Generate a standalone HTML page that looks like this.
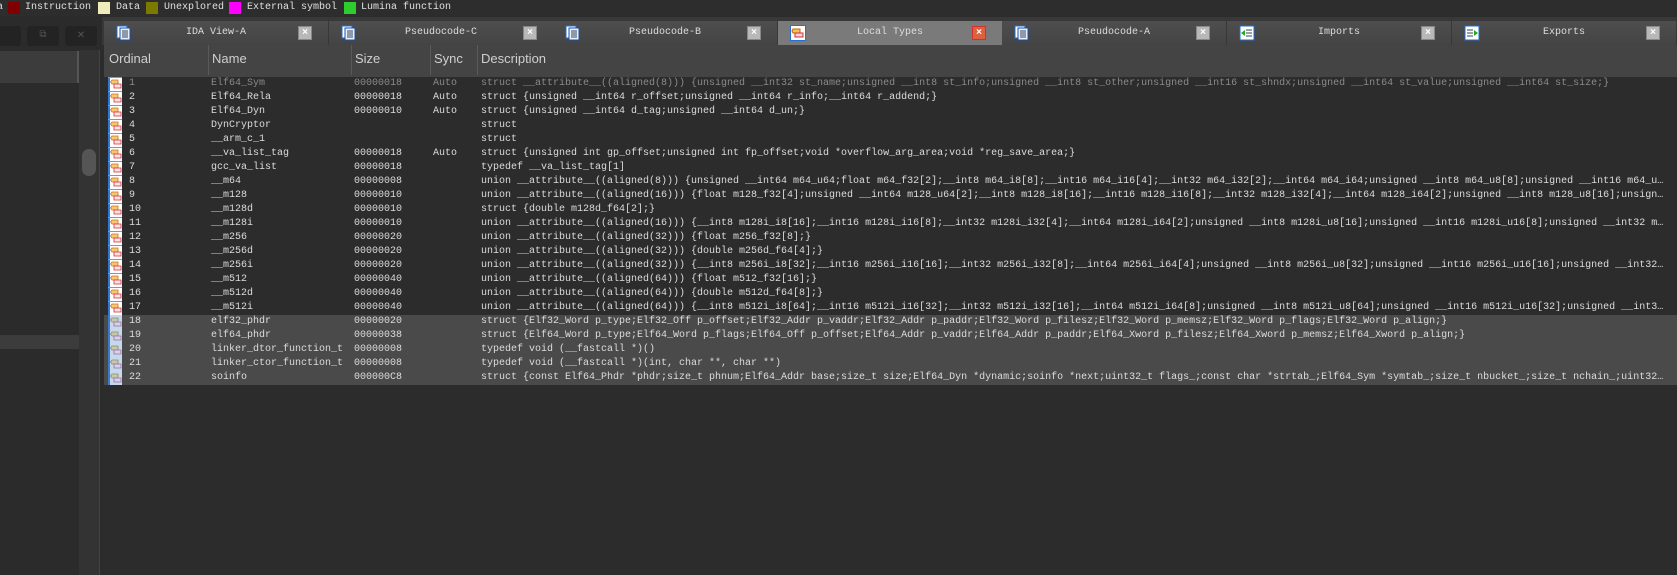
<!DOCTYPE html>
<html><head><meta charset="utf-8"><style>
*{margin:0;padding:0;box-sizing:border-box}
body{width:1677px;height:575px;background:#2c2c2c;overflow:hidden;position:relative;font-family:"Liberation Mono","Noto Sans CJK SC",monospace;font-size:10px;color:#dcdcdc}
.abs{position:absolute}
.leg{top:0;left:0;height:16px;width:1677px;background:#2d2d2d}
.sq{position:absolute;top:2px;width:12px;height:12px}
.lt{position:absolute;top:1px;line-height:14px;color:#e0e0e0;font-size:10px}
.tabbar{top:17px;left:102px;width:1575px;height:28px;background:#383838}
.tab{position:absolute;top:21px;height:24px;width:224px;background:linear-gradient(#4e4e4e,#444)}
.tab.act{background:#7a7a7a}
.tab .t{position:absolute;left:0;width:224px;text-align:center;top:5px;line-height:14px;color:#ddd}
.tab .x{position:absolute;left:194px;top:5px;width:14px;height:14px;background:#b8b8b8;border:1px solid #888;color:#fff;font:bold 10px "Liberation Sans",sans-serif;text-align:center;line-height:12px}
.tab.act .x{background:#e0603e;border-color:#c33}
.tab svg{position:absolute;left:12px;top:4px}
.hdr{top:45px;left:104px;width:1573px;height:32px;background:#444}
.hc{position:absolute;top:1px;font:13px "Liberation Sans",sans-serif;color:#cfcfcf;line-height:32px;top:0;height:28px;line-height:18px;padding-top:5px}
.sep{position:absolute;top:45px;width:1px;height:30px;background:#5a5a5a}
.row{position:absolute;left:104px;width:1573px;height:14px;line-height:14px;white-space:nowrap}
.row.sel{background:#4a4a4a}
.row span{position:absolute;top:0}
.row .d{left:377px;width:1187px;overflow:hidden;text-overflow:ellipsis}
.row.g{color:#8a8a8a}
.ic{position:absolute;left:4px;top:0}
</style></head><body>
<div class="abs leg"></div>
<span class="lt" style="left:-3px">a</span>
<div class="sq" style="left:8px;background:#800000"></div><span class="lt" style="left:25px">Instruction</span>
<div class="sq" style="left:98px;background:#f0ebbb"></div><span class="lt" style="left:116px">Data</span>
<div class="sq" style="left:146px;background:#7a7a00"></div><span class="lt" style="left:164px">Unexplored</span>
<div class="sq" style="left:229px;background:#ff00ff"></div><span class="lt" style="left:247px">External symbol</span>
<div class="sq" style="left:344px;background:#2ecc2e"></div><span class="lt" style="left:361px">Lumina function</span>

<!-- left panel -->
<div class="abs" style="left:0;top:17px;width:101px;height:558px;background:#2b2b2b"></div>
<div class="abs" style="left:-4px;top:26px;width:25px;height:20px;background:#232323;border-radius:3px"></div>
<div class="abs" style="left:27px;top:26px;width:32px;height:20px;background:#232323;border-radius:3px;color:#555;text-align:center;line-height:20px">⧉</div>
<div class="abs" style="left:65px;top:26px;width:32px;height:20px;background:#232323;border-radius:3px;color:#555;text-align:center;line-height:20px;font-family:'Liberation Sans'">✕</div>
<div class="abs" style="left:0;top:51px;width:77px;height:32px;background:#3c3c3c"></div>
<div class="abs" style="left:77px;top:51px;width:2px;height:32px;background:#555"></div>
<div class="abs" style="left:79px;top:50px;width:21px;height:525px;background:#333"></div>
<div class="abs" style="left:82px;top:149px;width:14px;height:27px;background:#555;border-radius:7px"></div>
<div class="abs" style="left:0;top:335px;width:79px;height:14px;background:#3c3c3c"></div>
<div class="abs" style="left:99px;top:50px;width:1px;height:525px;background:#444"></div>

<div class="abs tabbar"></div>
<div class="tab" style="left:104px"><svg width="16" height="16"><rect x="1" y="1" width="10" height="12" fill="#fff" stroke="#1e6fd0"/><rect x="4" y="3" width="10" height="12" fill="#e8f0ff" stroke="#1e4fa0"/><path d="M6 6h6M6 8h6M6 10h6M6 12h6" stroke="#345" /></svg><div class="t">IDA View-A</div><div class="x">×</div></div>
<div class="tab" style="left:329px"><svg width="16" height="16"><rect x="1" y="1" width="10" height="12" fill="#fff" stroke="#1e6fd0"/><rect x="4" y="3" width="10" height="12" fill="#e8f0ff" stroke="#1e4fa0"/><path d="M6 6h6M6 8h6M6 10h6M6 12h6" stroke="#345" /></svg><div class="t">Pseudocode-C</div><div class="x">×</div></div>
<div class="tab" style="left:553px"><svg width="16" height="16"><rect x="1" y="1" width="10" height="12" fill="#fff" stroke="#1e6fd0"/><rect x="4" y="3" width="10" height="12" fill="#e8f0ff" stroke="#1e4fa0"/><path d="M6 6h6M6 8h6M6 10h6M6 12h6" stroke="#345" /></svg><div class="t">Pseudocode-B</div><div class="x">×</div></div>
<div class="tab act" style="left:778px"><svg width="16" height="16"><rect x="0.5" y="0.5" width="15" height="15" fill="#fff" stroke="#2a6fd0"/><path d="M3 4h7v4H3l-1-2z" fill="#f6c060" stroke="#c60"/><path d="M5 8h8v4H5z" fill="#f8d0e0" stroke="#c33"/></svg><div class="t">Local Types</div><div class="x">×</div></div>
<div class="tab" style="left:1002px"><svg width="16" height="16"><rect x="1" y="1" width="10" height="12" fill="#fff" stroke="#1e6fd0"/><rect x="4" y="3" width="10" height="12" fill="#e8f0ff" stroke="#1e4fa0"/><path d="M6 6h6M6 8h6M6 10h6M6 12h6" stroke="#345" /></svg><div class="t">Pseudocode-A</div><div class="x">×</div></div>
<div class="tab" style="left:1227px"><svg width="16" height="16"><rect x="1" y="1" width="14" height="14" fill="#fff" stroke="#1e6fd0"/><path d="M7 5h6M7 8h6M7 11h6" stroke="#345"/><path d="M2 8l4-3v6z" fill="#2a2"/></svg><div class="t">Imports</div><div class="x">×</div></div>
<div class="tab" style="left:1452px"><svg width="16" height="16"><rect x="1" y="1" width="14" height="14" fill="#fff" stroke="#1e6fd0"/><path d="M3 5h6M3 8h6M3 11h6" stroke="#345"/><path d="M14 8l-4-3v6z" fill="#2a2"/></svg><div class="t">Exports</div><div class="x">×</div></div>

<div class="abs hdr"></div>
<div class="hc" style="left:109px;top:45px">Ordinal</div>
<div class="sep" style="left:208px"></div><div class="hc" style="left:212px;top:45px">Name</div>
<div class="sep" style="left:351px"></div><div class="hc" style="left:355px;top:45px">Size</div>
<div class="sep" style="left:430px"></div><div class="hc" style="left:434px;top:45px">Sync</div>
<div class="sep" style="left:477px"></div><div class="hc" style="left:481px;top:45px">Description</div>

<div id="rows"></div>
<svg width="0" height="0" style="position:absolute"><defs>
<symbol id="i" viewBox="0 0 14 14"><rect x="0" y="0" width="14" height="14" fill="#fff"/><rect x="0" y="0" width="2" height="14" fill="#2a7ad8"/><rect x="0" y="0" width="14" height="1" fill="#5aa0e8"/><path d="M4 3h6v4H4l-1.5-2z" fill="#f8c870" stroke="#d07020" stroke-width=".8"/><path d="M6 7h7v4H6z" fill="#fbe0ea" stroke="#d03030" stroke-width=".8"/></symbol>
<symbol id="j" viewBox="0 0 14 14"><rect x="0" y="0" width="14" height="14" fill="#c8d8ec"/><rect x="0" y="0" width="2" height="14" fill="#3a7ac8"/><path d="M4 3h6v4H4l-1.5-2z" fill="#c8c8a8" stroke="#8a8a70" stroke-width=".8"/><path d="M6 7h7v4H6z" fill="#d8d0e8" stroke="#9070a0" stroke-width=".8"/></symbol>
</defs></svg>
<script>
var R=[
["1","Elf64_Sym","00000018","Auto","struct __attribute__((aligned(8))) {unsigned __int32 st_name;unsigned __int8 st_info;unsigned __int8 st_other;unsigned __int16 st_shndx;unsigned __int64 st_value;unsigned __int64 st_size;}"],
["2","Elf64_Rela","00000018","Auto","struct {unsigned __int64 r_offset;unsigned __int64 r_info;__int64 r_addend;}"],
["3","Elf64_Dyn","00000010","Auto","struct {unsigned __int64 d_tag;unsigned __int64 d_un;}"],
["4","DynCryptor","","","struct"],
["5","__arm_c_1","","","struct"],
["6","__va_list_tag","00000018","Auto","struct {unsigned int gp_offset;unsigned int fp_offset;void *overflow_arg_area;void *reg_save_area;}"],
["7","gcc_va_list","00000018","","typedef __va_list_tag[1]"],
["8","__m64","00000008","","union __attribute__((aligned(8))) {unsigned __int64 m64_u64;float m64_f32[2];__int8 m64_i8[8];__int16 m64_i16[4];__int32 m64_i32[2];__int64 m64_i64;unsigned __int8 m64_u8[8];unsigned __int16 m64_u16[4];unsigned __int32 m64_u32[2];}"],
["9","__m128","00000010","","union __attribute__((aligned(16))) {float m128_f32[4];unsigned __int64 m128_u64[2];__int8 m128_i8[16];__int16 m128_i16[8];__int32 m128_i32[4];__int64 m128_i64[2];unsigned __int8 m128_u8[16];unsigned __int16 m128_u16[8];}"],
["10","__m128d","00000010","","struct {double m128d_f64[2];}"],
["11","__m128i","00000010","","union __attribute__((aligned(16))) {__int8 m128i_i8[16];__int16 m128i_i16[8];__int32 m128i_i32[4];__int64 m128i_i64[2];unsigned __int8 m128i_u8[16];unsigned __int16 m128i_u16[8];unsigned __int32 m128i_u32[4];}"],
["12","__m256","00000020","","union __attribute__((aligned(32))) {float m256_f32[8];}"],
["13","__m256d","00000020","","union __attribute__((aligned(32))) {double m256d_f64[4];}"],
["14","__m256i","00000020","","union __attribute__((aligned(32))) {__int8 m256i_i8[32];__int16 m256i_i16[16];__int32 m256i_i32[8];__int64 m256i_i64[4];unsigned __int8 m256i_u8[32];unsigned __int16 m256i_u16[16];unsigned __int32 m256i_u32[8];}"],
["15","__m512","00000040","","union __attribute__((aligned(64))) {float m512_f32[16];}"],
["16","__m512d","00000040","","union __attribute__((aligned(64))) {double m512d_f64[8];}"],
["17","__m512i","00000040","","union __attribute__((aligned(64))) {__int8 m512i_i8[64];__int16 m512i_i16[32];__int32 m512i_i32[16];__int64 m512i_i64[8];unsigned __int8 m512i_u8[64];unsigned __int16 m512i_u16[32];unsigned __int32 m512i_u32[16];}"],
["18","elf32_phdr","00000020","","struct {Elf32_Word p_type;Elf32_Off p_offset;Elf32_Addr p_vaddr;Elf32_Addr p_paddr;Elf32_Word p_filesz;Elf32_Word p_memsz;Elf32_Word p_flags;Elf32_Word p_align;}"],
["19","elf64_phdr","00000038","","struct {Elf64_Word p_type;Elf64_Word p_flags;Elf64_Off p_offset;Elf64_Addr p_vaddr;Elf64_Addr p_paddr;Elf64_Xword p_filesz;Elf64_Xword p_memsz;Elf64_Xword p_align;}"],
["20","linker_dtor_function_t","00000008","","typedef void (__fastcall *)()"],
["21","linker_ctor_function_t","00000008","","typedef void (__fastcall *)(int, char **, char **)"],
["22","soinfo","000000C8","","struct {const Elf64_Phdr *phdr;size_t phnum;Elf64_Addr base;size_t size;Elf64_Dyn *dynamic;soinfo *next;uint32_t flags_;const char *strtab_;Elf64_Sym *symtab_;size_t nbucket_;size_t nchain_;uint32_t *bucket_;uint32_t *chain_;}"]];
var h="";
R.forEach(function(r,i){var n=i+1;var c="row"+(n>=18?" sel":"")+(n==1?" g":"");
h+='<div class="'+c+'" style="top:'+(77+14*i)+'px"><svg class="ic" width="14" height="14"><use href="#'+(n>=18?'j':'i')+'"/></svg><span style="left:25px">'+r[0]+'</span><span style="left:107px">'+r[1]+'</span><span style="left:250px">'+r[2]+'</span><span style="left:329px">'+r[3]+'</span><span class="d">'+r[4]+'</span></div>';});
document.getElementById("rows").innerHTML=h;
</script>
</body></html>
